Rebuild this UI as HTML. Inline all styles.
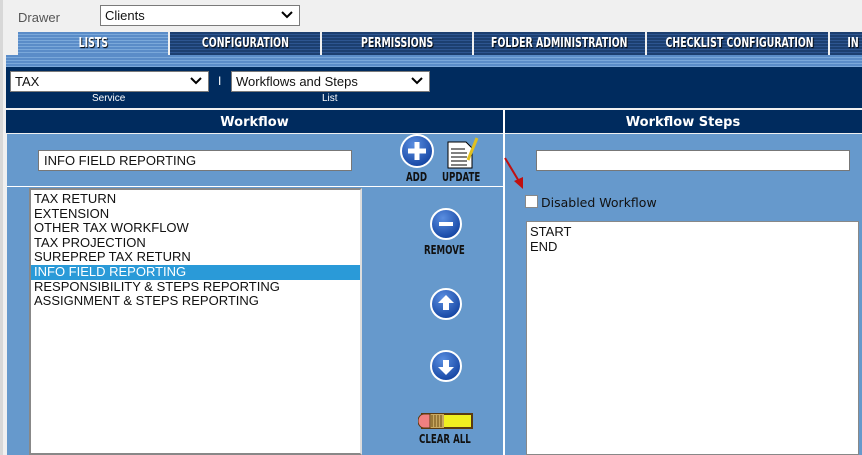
<!DOCTYPE html>
<html><head><meta charset="utf-8"><style>
*{box-sizing:border-box;margin:0;padding:0}
body{width:862px;height:455px;overflow:hidden;background:#f0f0f0;font-family:"Liberation Sans",Arial,sans-serif;position:relative}
.a{position:absolute}
.sel{position:absolute;background:#fff;border:1px solid #7a7a7a;font-size:13px;color:#111;padding:1px 4px;line-height:17px}
.sel svg{position:absolute;right:6px;top:5px}
.tab{position:absolute;top:32px;height:23px;color:#fff;font:bold 13px "DejaVu Sans Condensed","Liberation Sans Narrow",sans-serif;text-align:center;line-height:23px;white-space:nowrap;overflow:hidden;text-shadow:1px 1px 1px #000;
background:repeating-linear-gradient(#1c3f70 0 2px,#2d5590 2px 3px)}
.tab span{display:inline-block;transform:scaleX(.8)}
.lbl{position:absolute;font:bold 12px "DejaVu Sans Condensed",sans-serif;color:#111;transform:scaleX(.8);transform-origin:left;white-space:nowrap}
.inp{position:absolute;background:#fff;border:1px solid #777;font-size:13px;padding:2px 5px;line-height:15px;color:#111}
.list div{font-size:13px;line-height:14.6px;padding-left:3px;color:#111}
.hd{position:absolute;top:115px;text-align:center;color:#fff;font:bold 13px "DejaVu Sans",Verdana,sans-serif}
</style></head><body>
<div class="a" style="left:0;top:0;width:3px;height:455px;background:#d8d8d8"></div>
<div class="a" style="left:18px;top:10px;font-size:13px;color:#555">Drawer</div>
<div class="sel" style="left:100px;top:5px;width:200px;height:21px">Clients<svg width="12" height="8"><path d="M1 1l5 5 5-5" stroke="#000" stroke-width="2" fill="none"/></svg></div>

<div class="tab" style="left:18px;width:150px;background:repeating-linear-gradient(#5a8cc8 0 2px,#7aa8da 2px 3px)"><span>LISTS</span></div>
<div class="tab" style="left:170px;width:150px"><span>CONFIGURATION</span></div>
<div class="tab" style="left:322px;width:150px"><span>PERMISSIONS</span></div>
<div class="tab" style="left:474px;width:171px"><span>FOLDER ADMINISTRATION</span></div>
<div class="tab" style="left:647px;width:181px"><span>CHECKLIST CONFIGURATION</span></div>
<div class="tab" style="left:830px;width:40px;text-align:left;padding-left:16px"><span>IN</span></div>

<div class="a" style="left:6px;top:55px;width:856px;height:12px;background:repeating-linear-gradient(#5a8cc8 0 2px,#7aa8da 2px 3px)"></div>
<div class="a" style="left:6px;top:67px;width:856px;height:41px;background:#002b5e"></div>
<div class="sel" style="left:10px;top:71px;width:199px;height:21px">TAX<svg width="12" height="8"><path d="M1 1l5 5 5-5" stroke="#000" stroke-width="2" fill="none"/></svg></div>
<div class="a" style="left:218px;top:74px;color:#fff;font-size:12px">I</div>
<div class="sel" style="left:231px;top:71px;width:199px;height:21px">Workflows and Steps<svg width="12" height="8"><path d="M1 1l5 5 5-5" stroke="#000" stroke-width="2" fill="none"/></svg></div>
<div class="a" style="left:92px;top:93px;color:#fff;font-size:10px">Service</div>
<div class="a" style="left:322px;top:93px;color:#fff;font-size:10px">List</div>

<div class="a" style="left:6px;top:110px;width:856px;height:23px;background:#002b5e"></div>
<div class="hd" style="left:6px;width:497px">Workflow</div>
<div class="hd" style="left:504px;width:358px">Workflow Steps</div>
<div class="a" style="left:7px;top:134px;width:855px;height:321px;background:#6699cc"></div>
<div class="a" style="left:503px;top:110px;width:2px;height:345px;background:#fff"></div>
<div class="a" style="left:7px;top:186px;width:496px;height:1px;background:#fff"></div>

<div class="inp" style="left:38px;top:150px;width:314px;height:21px">INFO FIELD REPORTING</div>
<div class="inp" style="left:536px;top:150px;width:314px;height:21px"></div>

<svg class="a" style="left:398px;top:134px" width="90" height="52">
<defs><radialGradient id="g" cx=".4" cy=".3" r=".8"><stop offset="0" stop-color="#5a8ee0"/><stop offset="1" stop-color="#0a3a9a"/></radialGradient></defs>
<circle cx="19" cy="17" r="16" fill="url(#g)" stroke="#fff" stroke-width="2"/>
<path d="M19 8v18M10 17h18" stroke="#fff" stroke-width="5"/>
<path d="M50 8h18l6 6v20h-24z" fill="#fff" stroke="#000"/>
<path d="M53 15h14M53 19h16M53 23h16M53 27h16M53 31h16" stroke="#000"/>
<path d="M70 26l9-22" stroke="#e0c020" stroke-width="3"/>
</svg>
<div class="lbl" style="left:406px;top:170px">ADD</div>
<div class="lbl" style="left:442px;top:170px">UPDATE</div>

<div class="a list" style="left:29px;top:188px;width:333px;height:267px;background:#fff;border:2px solid #888;border-right-color:#ddd;padding-top:2px">
<div>TAX RETURN</div><div>EXTENSION</div><div>OTHER TAX WORKFLOW</div><div>TAX PROJECTION</div><div>SUREPREP TAX RETURN</div>
<div style="background:#2a9ad8;color:#fff">INFO FIELD REPORTING</div>
<div>RESPONSIBILITY &amp; STEPS REPORTING</div><div>ASSIGNMENT &amp; STEPS REPORTING</div></div>

<svg class="a" style="left:428px;top:206px" width="36" height="180">
<circle cx="18" cy="18" r="15" fill="url(#g)" stroke="#fff" stroke-width="2"/><path d="M11 18h14" stroke="#fff" stroke-width="4"/>
<circle cx="18" cy="98" r="15" fill="url(#g)" stroke="#fff" stroke-width="2"/><path d="M18 89l-8 8h5v7h6v-7h5z" fill="#fff"/>
<circle cx="18" cy="160" r="15" fill="url(#g)" stroke="#fff" stroke-width="2"/><path d="M18 169l-8-8h5v-7h6v7h5z" fill="#fff"/>
</svg>
<div class="lbl" style="left:424px;top:243px">REMOVE</div>
<svg class="a" style="left:418px;top:412px" width="56" height="18">
<rect x="4" y="2" width="50" height="14" fill="#f0f020" stroke="#5a3a10" stroke-width="2"/>
<rect x="12" y="2" width="14" height="14" fill="#c8a860"/>
<path d="M14 3v12M17 3v12M20 3v12M23 3v12" stroke="#6a4a10"/>
<path d="M12 2h-6a6 7 0 0 0 0 14h6z" fill="#f08080" stroke="#5a3a10"/>
</svg>
<div class="lbl" style="left:419px;top:432px">CLEAR ALL</div>

<svg class="a" style="left:500px;top:155px" width="30" height="40"><path d="M5 3l15 25" stroke="#c01010" stroke-width="2"/><path d="M14 26l9 8 0-12z" fill="#c01010"/></svg>
<div class="a" style="left:525px;top:195px;width:13px;height:13px;background:#fff;border:1px solid #888"></div>
<div class="a" style="left:541px;top:195px;font-size:12.5px;font-family:'DejaVu Sans',Verdana,sans-serif;color:#111">Disabled Workflow</div>
<div class="a list" style="left:526px;top:221px;width:333px;height:234px;background:#fff;border:1px solid #888;padding-top:3px"><div>START</div><div>END</div></div>
</body></html>
